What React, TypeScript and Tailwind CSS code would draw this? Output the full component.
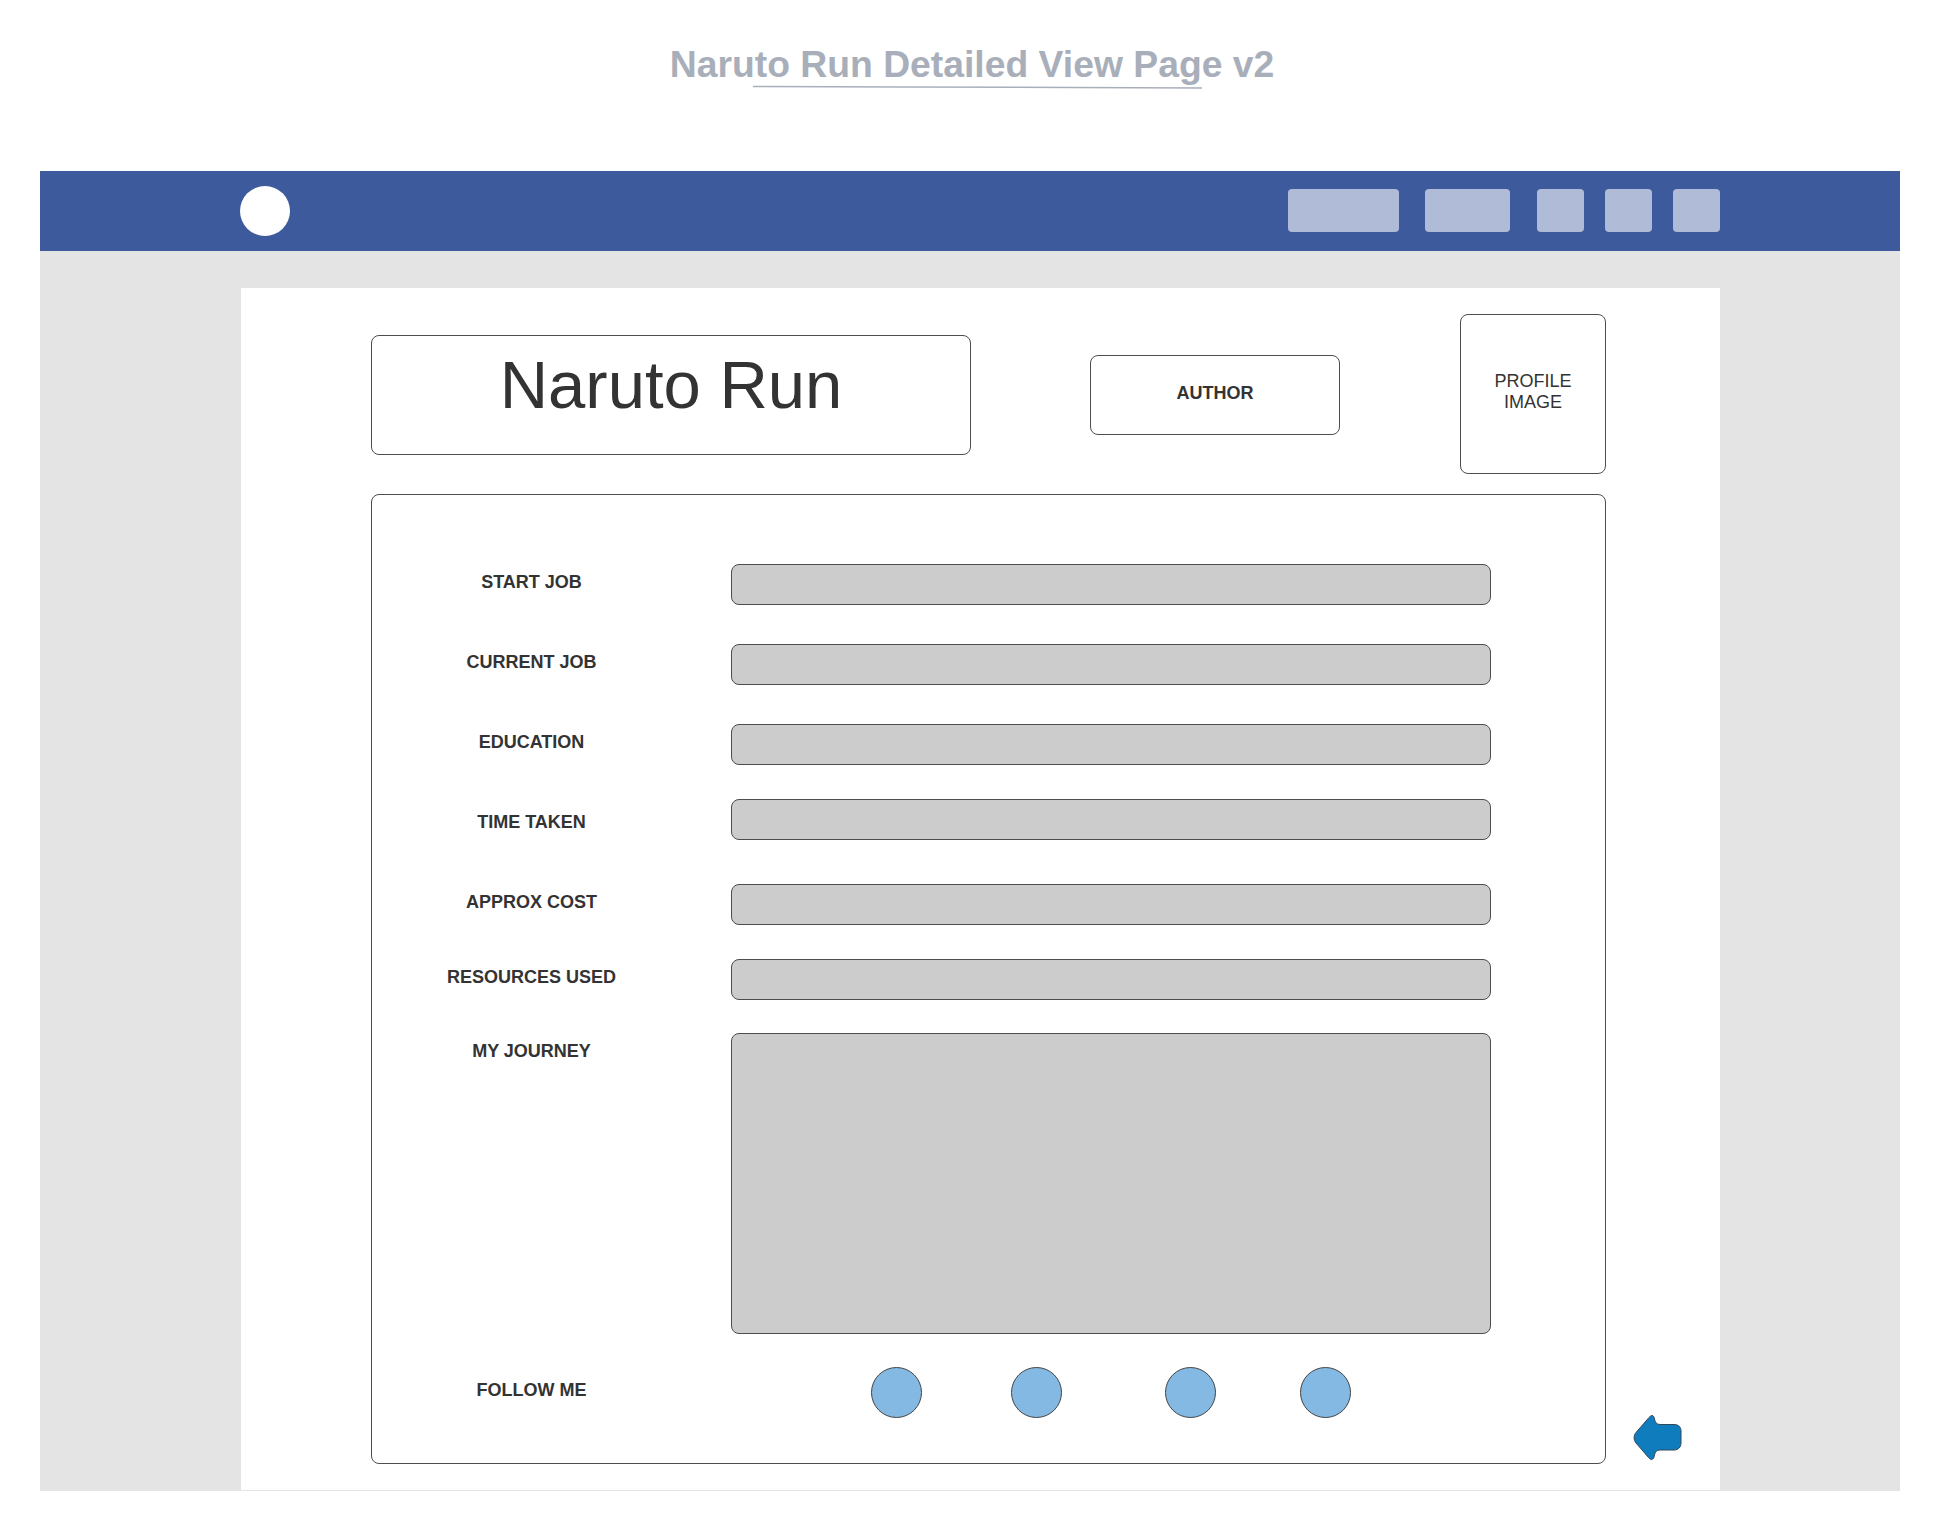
import React from 'react';

// Field rows of the detail form, top margin is the gap to the row above
const fields = [
  { label: 'START JOB', rowClass: 'mt-0', labelClass: '' },
  { label: 'CURRENT JOB', rowClass: 'mt-[39px]', labelClass: '' },
  { label: 'EDUCATION', rowClass: 'mt-[39px]', labelClass: '' },
  { label: 'TIME TAKEN', rowClass: 'mt-[34px]', labelClass: 'mt-[5px]' },
  { label: 'APPROX COST', rowClass: 'mt-[44px]', labelClass: '' },
  { label: 'RESOURCES USED', rowClass: 'mt-[34px]', labelClass: '' },
];

const boxClass = 'border border-[#4d4d4d] rounded-[8px]';
const labelClass = 'w-[319px] h-[36px] flex items-center justify-center text-[18px] font-bold text-[#333333]';
const inputClass = 'ml-[40px] w-[760px] bg-[#cccccc] border border-[#4d4d4d] rounded-[8px]';
const socialClass = 'w-[51px] h-[51px] rounded-full bg-[#83b9e3] border border-[#444444]';

const BackArrow: React.FC = () => (
  <svg width="50" height="47" viewBox="0 0 50 47" className="block">
    <path
      d="M19 1.5 C20.5 1.5 21 3 21.5 5 C22 8 23.5 10.5 27 10.5 L41 10.5 C45.5 10.5 48 13 48 17 L48 29 C48 33 45.5 36 41 36 L27 36 C23.5 36 22 38 21.5 41 C21 44 20 45.5 18.5 45.5 C17.5 45.5 16.5 44.5 15.5 43.5 L3 29 C0.5 26 0.5 21.5 3 18.5 L16 3.5 C17 2.5 18 1.5 19 1.5 Z"
      fill="#0e7cbd"
      stroke="#33475b"
      strokeWidth="1"
    />
  </svg>
);

const App: React.FC = () => {
  return (
    <div className="min-h-[1532px] bg-white font-['Liberation_Sans',Arial,sans-serif]">
      {/* Page title */}
      <div className="h-[171px] pt-[42px] flex flex-col items-center">
        <h1 className="ml-[4px] text-[37.3px] leading-[44px] font-bold text-[#a9afba]">Naruto Run Detailed View Page v2</h1>
        <svg width="452" height="5" viewBox="0 0 452 5" className="block -mt-[1px] ml-[15px]">
          <path d="M1 1.5 L150 2 L320 2.5 L450 3" stroke="#a9afba" strokeWidth="1.5" fill="none" />
        </svg>
      </div>

      <div className="mx-[40px] w-[1860px]">
        {/* Top bar */}
        <header className="h-[80px] bg-[#3c5a9c] pl-[200px] flex items-center">
          <div className="w-[50px] h-[50px] rounded-full bg-white" />
          <div className="ml-auto mr-[180px] -mt-[1px] flex items-center">
            <div className="w-[111px] h-[43px] rounded-[4px] bg-[#b0bcd7]" />
            <div className="ml-[26px] w-[85px] h-[43px] rounded-[4px] bg-[#b0bcd7]" />
            <div className="ml-[27px] w-[47px] h-[43px] rounded-[4px] bg-[#b0bcd7]" />
            <div className="ml-[21px] w-[47px] h-[43px] rounded-[4px] bg-[#b0bcd7]" />
            <div className="ml-[21px] w-[47px] h-[43px] rounded-[4px] bg-[#b0bcd7]" />
          </div>
        </header>

        {/* Page body */}
        <div className="h-[1240px] bg-[#e4e4e4] pt-[37px] pl-[201px]">
          <main className="w-[1479px] h-[1203px] bg-white border-b border-b-[#e4e4e4] pl-[130px] pt-[26px]">
            {/* Title, author and profile image */}
            <div className="w-[1235px] flex items-start">
              <div className={`mt-[21px] w-[600px] h-[120px] pt-[12px] text-center text-[67px] leading-[74px] text-[#333333] ${boxClass}`}>
                Naruto Run
              </div>
              <div className={`mt-[41px] ml-[119px] w-[250px] h-[80px] pb-[4px] flex items-center justify-center text-[18px] font-bold text-[#333333] ${boxClass}`}>
                AUTHOR
              </div>
              <div className={`ml-[120px] w-[146px] h-[160px] pb-[5px] flex items-center justify-center text-center text-[18px] leading-[21px] text-[#333333] ${boxClass}`}>
                PROFILE
                <br />
                IMAGE
              </div>
            </div>

            <div className="mt-[20px] flex items-end">
              {/* Detail panel */}
              <section className={`w-[1235px] h-[970px] pt-[69px] ${boxClass}`}>
                {fields.map((field) => (
                  <div key={field.label} className={`flex items-start ${field.rowClass}`}>
                    <div className={`${labelClass} ${field.labelClass}`}>{field.label}</div>
                    <div className={`h-[41px] ${inputClass}`} />
                  </div>
                ))}
                <div className="mt-[33px] flex items-start">
                  <div className={labelClass}>MY JOURNEY</div>
                  <div className={`h-[301px] ${inputClass}`} />
                </div>
                <div className="mt-[33px] flex items-center">
                  <div className={`${labelClass} -mt-[5px]`}>FOLLOW ME</div>
                  <div className={`ml-[180px] ${socialClass}`} />
                  <div className={`ml-[89px] ${socialClass}`} />
                  <div className={`ml-[103px] ${socialClass}`} />
                  <div className={`ml-[84px] ${socialClass}`} />
                </div>
              </section>
              <div className="ml-[27px] mb-[3px]">
                <BackArrow />
              </div>
            </div>
          </main>
        </div>
      </div>
    </div>
  );
};

export default App;
